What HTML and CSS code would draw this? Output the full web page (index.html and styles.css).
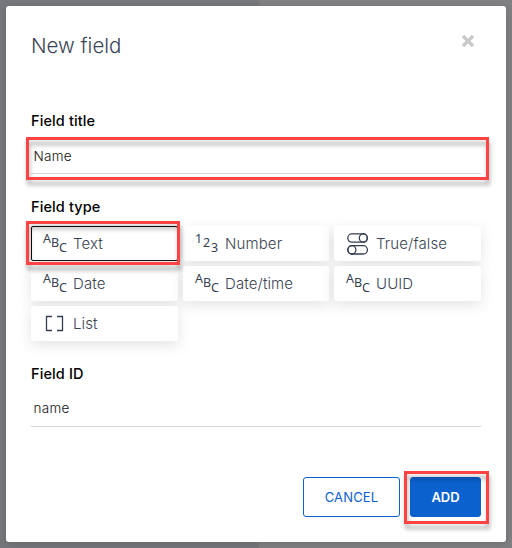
FILE: index.html
```html
<!DOCTYPE html>
<html lang="en">
<head>
<meta charset="utf-8">
<title>New field</title>
<link rel="stylesheet" href="styles.css">
</head>
<body>
<svg class="defs" aria-hidden="true">
  <symbol id="toggles" viewBox="0 0 22 22">
    <g fill="none" stroke="currentColor" stroke-width="1.3">
      <rect x=".8" y=".9" width="19.6" height="8.3" rx="4.1"/>
      <ellipse cx="16.3" cy="5.05" rx="4" ry="4.15"/>
      <rect x=".8" y="12.7" width="19.6" height="8.3" rx="4.1"/>
      <ellipse cx="4.9" cy="16.85" rx="4" ry="4.15"/>
    </g>
  </symbol>
  <symbol id="brackets" viewBox="0 0 22 22">
    <path d="M8 3.5H2.5v14H8M13 3.5h5.5v14H13" fill="none" stroke="currentColor" stroke-width="1.3"/>
  </symbol>
</svg>
<main class="dialog">
  <header class="head">
    <h1 class="title">New field</h1>
    <button class="close" aria-label="Close"><svg width="14" height="14" viewBox="0 0 14 14"><path d="M2 2l10 10M12 2l-10 10" stroke="#c9c9c9" stroke-width="3.3"/></svg></button>
  </header>
  <section class="group group-title">
    <h2 class="label">Field title</h2>
    <div class="input marked mark-input"><span>Name</span></div>
  </section>
  <section class="group group-type">
    <h2 class="label">Field type</h2>
    <div class="types">
      <div class="type selected marked mark-type"><span class="steps"><i>A</i><i>B</i><i>C</i></span><span class="name">Text</span></div>
      <div class="type"><span class="steps"><i>1</i><i>2</i><i>3</i></span><span class="name">Number</span></div>
      <div class="type"><svg class="icon"><use href="#toggles"/></svg><span class="name">True/false</span></div>
      <div class="type"><span class="steps"><i>A</i><i>B</i><i>C</i></span><span class="name">Date</span></div>
      <div class="type"><span class="steps"><i>A</i><i>B</i><i>C</i></span><span class="name">Date/time</span></div>
      <div class="type"><span class="steps"><i>A</i><i>B</i><i>C</i></span><span class="name">UUID</span></div>
      <div class="type"><svg class="icon"><use href="#brackets"/></svg><span class="name">List</span></div>
    </div>
  </section>
  <section class="group group-id">
    <h2 class="label">Field ID</h2>
    <div class="input"><span class="value-id">name</span></div>
  </section>
  <footer class="actions">
    <button class="btn cancel">CANCEL</button>
    <div class="marked mark-add"><button class="btn add">ADD</button></div>
  </footer>
</main>
</body>
</html>
```

FILE: styles.css
```css
* { box-sizing: border-box; }
body {
  margin: 0;
  height: 548px;
  padding: 6px;
  overflow: hidden;
  background: linear-gradient(90deg, #77787b 0 259px, #808183 259px);
  font-family: Inter, Lato, sans-serif;
  font-variant-ligatures: none;
}
.defs { position: absolute; width: 0; height: 0; }
h1, h2 { margin: 0; }
button { font: inherit; padding: 0; cursor: pointer; }
.dialog {
  width: 500px;
  height: 536px;
  padding: 0 25px;
  background: #fff;
  border-radius: 3px;
  box-shadow: 0 2px 10px rgba(0, 0, 0, .15);
  display: flex;
  flex-direction: column;
}
.head {
  height: 104px;
  padding-top: 25px;
  display: flex;
  justify-content: space-between;
  align-items: flex-start;
}
.title { margin-top: 1px; font-size: 20.5px; line-height: 28px; font-weight: 300; color: #3a4455; }
.close { width: 14px; height: 14px; margin: 3px 6px 0 0; border: 0; background: none; display: flex; }
.label { font-size: 14.5px; line-height: 22px; font-weight: 500; color: #000; letter-spacing: .12px; }
.group-title { height: 86px; }
.group-type { height: 167px; }
.group-id { height: 114px; }
.input {
  height: 34px;
  margin-top: 8px;
  padding-left: 2.5px;
  border-bottom: 1px solid #d5d7d7;
  font-size: 13.5px;
  line-height: 32px;
  font-weight: 300;
  letter-spacing: .3px;
  color: #111;
}
.group-id .input { margin-top: 6px; height: 36px; line-height: 34px; }
.types {
  margin-top: 8px;
  display: grid;
  grid-template-columns: 147px 146px 147px;
  grid-auto-rows: 35px;
  gap: 5px;
}
.type {
  padding-left: 12px;
  border-radius: 2px;
  background: #fff;
  box-shadow: 0 4px 14px rgba(40, 50, 65, .13);
  display: flex;
  align-items: center;
  color: #343f50;
}
.selected { outline: 1px solid #101010; outline-offset: -1px; }
.name { margin-left: 6px; font-size: 15px; line-height: 35px; font-weight: 300; letter-spacing: .12px; color: #3a4455; }
.steps {
  width: 24px;
  height: 22px;
  display: flex;
  font: 12.5px/14px "Noto Sans", sans-serif;
}
.steps i { width: 8px; font-style: normal; }
.steps i:nth-child(1) { margin-top: -1px; }
.steps i:nth-child(2) { padding-top: 3px; }
.steps i:nth-child(3) { padding-top: 8px; }
.icon { width: 22px; height: 22px; margin: 0 1px; }
.marked { position: relative; }
.marked::after {
  content: "";
  position: absolute;
  z-index: 2;
  border: 3px solid #ff4343;
  filter: drop-shadow(1px 5px 2px rgba(0, 0, 0, .3));
  pointer-events: none;
}
.mark-input::after { inset: -3px -8px -7px -5px; }
.mark-type::after { inset: -5px -2px -4px -5px; }
.mark-add::after { inset: -6px -8px -7px -6px; }
.actions { display: flex; justify-content: flex-end; gap: 10px; }
.btn { display: block; height: 40px; padding-bottom: 1px; border: 1px solid #0b61ce; border-radius: 3px; font-size: 13px; }
.cancel { width: 97px; background: #fff; color: #0b61ce; letter-spacing: .15px; }
.add { width: 71px; background: #0b61ce; color: #fff; font-weight: 600; }
```
